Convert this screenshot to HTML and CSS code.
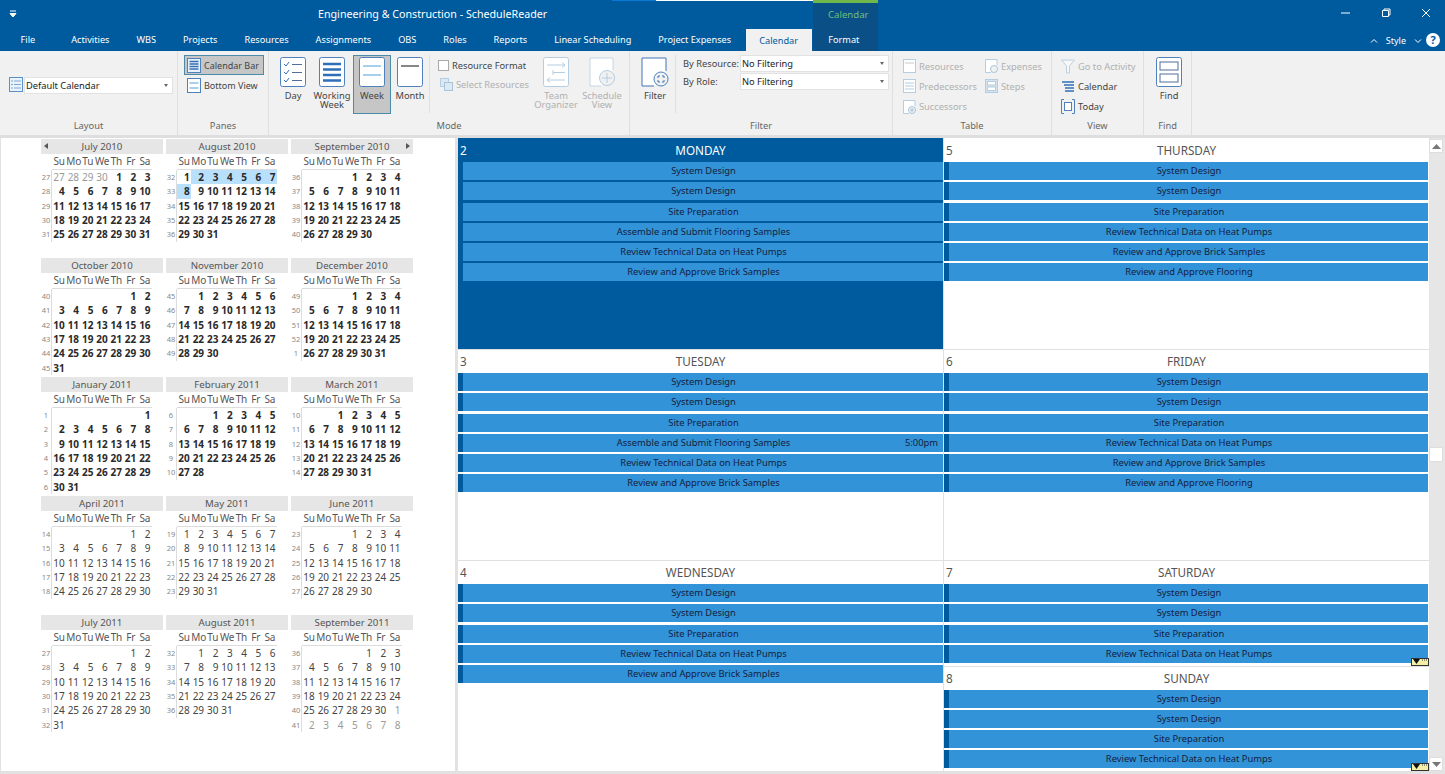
FILE: index.html
```html
<!DOCTYPE html>
<html lang="en">
<head>
    <meta charset="UTF-8">
    <title>Engineering &amp; Construction - ScheduleReader</title>
    <link rel="stylesheet" href="styles.css">
</head>
<body>
    <header class="titlebar">
        <div class="context-band"></div>
        <div class="progress-strip"><span class="strip-blue"></span><span class="strip-white"></span><span class="strip-green"></span></div>
        <div class="title-row">
            <svg class="qat" width="8" height="8" viewBox="0 0 8 8"><path d="M1 1h6M1 3.5h6L4 7z" stroke="#fff" fill="#fff"/></svg>
            <span class="app-title">Engineering &amp; Construction - ScheduleReader</span>
            <span class="context-title">Calendar</span>
            <div class="window-buttons">
                <svg width="10" height="10" viewBox="0 0 10 10"><path d="M0 5h9" stroke="#fff"/></svg>
                <svg width="10" height="10" viewBox="0 0 10 10"><path d="M1.5 2.5h6v6h-6zM3 2.5V1h6v6H7.5" stroke="#fff" fill="none"/></svg>
                <svg width="10" height="10" viewBox="0 0 10 10"><path d="M1 1l8 8M9 1l-8 8" stroke="#fff"/></svg>
            </div>
        </div>
        <nav class="tab-row">
            <a class="tab tab-file">File</a>
            <a class="tab">Activities</a>
            <a class="tab">WBS</a>
            <a class="tab">Projects</a>
            <a class="tab">Resources</a>
            <a class="tab">Assignments</a>
            <a class="tab">OBS</a>
            <a class="tab">Roles</a>
            <a class="tab">Reports</a>
            <a class="tab">Linear Scheduling</a>
            <a class="tab">Project Expenses</a>
            <a class="tab tab-active">Calendar</a>
            <a class="tab tab-format">Format</a>
            <div class="style-menu">
                <svg width="8" height="6" viewBox="0 0 8 6"><path d="M1 4.5l3-3 3 3" stroke="#fff" fill="none"/></svg>
                <span>Style</span>
                <svg width="8" height="6" viewBox="0 0 8 6"><path d="M1 1.5l3 3 3-3" stroke="#fff" fill="none"/></svg>
                <span class="help">?</span>
            </div>
        </nav>
    </header>

    <section class="ribbon">
        <div class="group g-layout">
            <div class="group-body">
                <svg width="14" height="15" viewBox="0 0 14 15"><rect x=".5" y=".5" width="13" height="14" fill="#eaf3fb" stroke="#5b8fc7"/><path d="M2 4h2M5 4h7M2 7.5h2M5 7.5h7M2 11h2M5 11h7" stroke="#7fa8d4"/></svg>
                <div class="combo combo-layout">Default Calendar<i class="caret"></i></div>
            </div>
            <div class="group-label">Layout</div>
        </div>

        <div class="group g-panes">
            <div class="group-body">
                <div class="small-btn selected">
                    <svg width="14" height="15" viewBox="0 0 14 15"><rect x=".5" y=".5" width="13" height="14" fill="#e8f1fa" stroke="#4f81bd"/><path d="M2.5 3.5h9M2.5 6h9M2.5 8.5h9M2.5 11h9" stroke="#3a70b5" stroke-width="1.3"/></svg>
                    Calendar Bar
                </div>
                <div class="small-btn">
                    <svg width="14" height="15" viewBox="0 0 14 15"><rect x=".5" y=".5" width="13" height="14" fill="#fff" stroke="#4f81bd"/><path d="M2.5 5h9M2.5 10h9" stroke="#8fc0e6" stroke-width="1.3"/></svg>
                    Bottom View
                </div>
            </div>
            <div class="group-label">Panes</div>
        </div>

        <div class="group g-mode">
            <div class="group-body">
                <div class="big-btn">
                    <svg width="26" height="30" viewBox="0 0 26 30"><rect x=".5" y=".5" width="25" height="29" rx="2" fill="#fff" stroke="#4f81bd"/><path d="M4 7l2 2 3-4M4 15l2 2 3-4M4 23l2 2 3-4" stroke="#2f6fb7" fill="none"/><path d="M12 7.5h10M12 15.5h10M12 23.5h10" stroke="#4f6fa0"/></svg>
                    <span>Day</span>
                </div>
                <div class="big-btn btn-working">
                    <svg width="26" height="30" viewBox="0 0 26 30"><rect x=".5" y=".5" width="25" height="29" rx="2" fill="#fff" stroke="#4f81bd"/><path d="M4 7h18M4 12.500h18M4 18h18M4 23.500h18" stroke="#2f6fb7" stroke-width="2.500"/></svg>
                    <span>Working<br>Week</span>
                </div>
                <div class="big-btn selected">
                    <svg width="26" height="30" viewBox="0 0 26 30"><rect x=".5" y=".5" width="25" height="29" rx="2" fill="#fff" stroke="#4f81bd"/><path d="M4 9h18M4 18h18" stroke="#a4d0ee" stroke-width="2"/></svg>
                    <span>Week</span>
                </div>
                <div class="big-btn">
                    <svg width="26" height="30" viewBox="0 0 26 30"><rect x=".5" y=".5" width="25" height="29" rx="2" fill="#fff" stroke="#4f81bd"/><path d="M4 9h18" stroke="#888" stroke-width="2"/></svg>
                    <span>Month</span>
                </div>
                <div class="inner-sep"></div>
                <div class="small-col">
                    <label class="check-row"><i class="checkbox"></i>Resource Format</label>
                    <div class="small-btn disabled">
                        <svg width="13" height="13" viewBox="0 0 13 13"><rect x=".5" y=".5" width="8" height="8" fill="#dce8f2" stroke="#b5cde0"/><rect x="4.500" y="4.500" width="8" height="8" fill="#dce8f2" stroke="#a8c4da"/></svg>
                        Select Resources
                    </div>
                </div>
                <div class="big-btn wide disabled">
                    <svg width="26" height="30" viewBox="0 0 26 30"><rect x=".5" y=".5" width="25" height="29" rx="2" fill="#fff" stroke="#b5cde0"/><path d="M4 8h18l-3-2.500M22 8l-3 2.500M10 15.500h12M10 13v5M4 23h18M4 23l3-2.500M4 23l3 2.500" fill="none" stroke="#b5cde0"/></svg>
                    <span>Team<br>Organizer</span>
                </div>
                <div class="big-btn wide disabled">
                    <svg width="26" height="30" viewBox="0 0 26 30"><path d="M24 13V1H1v28h11" fill="#fff" stroke="#c3d6e6"/><circle cx="18" cy="21" r="7.500" fill="#f1f1f1" stroke="#b5cde0"/><path d="M18 16v10M13 21h10" stroke="#b5cde0"/></svg>
                    <span>Schedule<br>View</span>
                </div>
            </div>
            <div class="group-label">Mode</div>
        </div>

        <div class="group g-filter">
            <div class="group-body">
                <div class="big-btn filter-btn">
                    <svg width="28" height="30" viewBox="0 0 28 30"><path d="M25 14V1H1v28h12" fill="#fff" stroke="#3f74b5"/><circle cx="20" cy="22" r="7" fill="#f1f1f1" stroke="#4f81bd"/><path d="M17 19h2M21 19h2M17 25h2M21 25h2M17 19v2M23 19v2M17 23v2M23 23v2" stroke="#3f74b5"/></svg>
                    <span>Filter</span>
                </div>
                <div class="inner-sep"></div>
                <div class="filter-fields">
                    <div class="filter-row"><span>By Resource:</span><div class="combo combo-filter">No Filtering<i class="caret"></i></div></div>
                    <div class="filter-row"><span>By Role:</span><div class="combo combo-filter">No Filtering<i class="caret"></i></div></div>
                </div>
            </div>
            <div class="group-label">Filter</div>
        </div>

        <div class="group g-table">
            <div class="group-body">
                <div class="small-col table-col">
                    <div class="small-btn disabled">
                        <svg width="13" height="14" viewBox="0 0 13 14"><rect x=".5" y=".5" width="12" height="13" fill="#fff" stroke="#b5cde0"/><path d="M2 4h9" stroke="#c8c8c8"/></svg>
                        Resources
                    </div>
                    <div class="small-btn disabled">
                        <svg width="13" height="14" viewBox="0 0 13 14"><rect x=".5" y=".5" width="12" height="13" fill="#fff" stroke="#b5cde0"/><path d="M2 4h9M2 7h9M2 10h9" stroke="#b5cde0"/></svg>
                        Predecessors
                    </div>
                    <div class="small-btn disabled">
                        <svg width="13" height="14" viewBox="0 0 13 14"><path d="M12 6V.5H.5v13H6" fill="#fff" stroke="#b5cde0"/><circle cx="9" cy="10" r="3.500" fill="#f1f1f1" stroke="#a8c4da"/><path d="M9 8v4M7 10h4" stroke="#a8c4da"/></svg>
                        Successors
                    </div>
                </div>
                <div class="small-col table-col">
                    <div class="small-btn disabled">
                        <svg width="13" height="14" viewBox="0 0 13 14"><path d="M12 6V.5H.5v13H6" fill="#fff" stroke="#b5cde0"/><circle cx="9" cy="10" r="3.500" fill="#f1f1f1" stroke="#a8c4da"/></svg>
                        Expenses
                    </div>
                    <div class="small-btn disabled">
                        <svg width="13" height="14" viewBox="0 0 13 14"><rect x=".5" y=".5" width="12" height="13" fill="#d5e3ef" stroke="#b5cde0"/><rect x="2.500" y="2.500" width="8" height="3.500" fill="#fff" stroke="#b5cde0"/><rect x="2.500" y="8" width="8" height="3.500" fill="#fff" stroke="#b5cde0"/></svg>
                        Steps
                    </div>
                </div>
            </div>
            <div class="group-label">Table</div>
        </div>

        <div class="group g-view">
            <div class="group-body">
                <div class="small-col table-col">
                    <div class="small-btn disabled">
                        <svg width="14" height="15" viewBox="0 0 14 15"><path d="M.5 1h13L8.500 7v7h-3V7z" fill="#f7f7f7" stroke="#bcd0e0"/></svg>
                        Go to Activity
                    </div>
                    <div class="small-btn">
                        <svg width="14" height="15" viewBox="0 0 14 15"><path d="M1 3h12M3 6h10M4 9h9M4 12h9" stroke="#2f6fb7" stroke-width="1.600"/></svg>
                        Calendar
                    </div>
                    <div class="small-btn">
                        <svg width="14" height="15" viewBox="0 0 14 15"><path d="M3 .5H.5v14H3M11 .5h2.500v14H11" fill="none" stroke="#4f81bd"/><rect x="3.500" y="3.500" width="7" height="8" fill="#fff" stroke="#4f81bd"/></svg>
                        Today
                    </div>
                </div>
            </div>
            <div class="group-label">View</div>
        </div>

        <div class="group g-find">
            <div class="group-body">
                <div class="big-btn">
                    <svg width="26" height="30" viewBox="0 0 26 30"><rect x=".5" y=".5" width="25" height="29" rx="2" fill="#fff" stroke="#4f81bd"/><rect x="4" y="5" width="18" height="8" fill="#fff" stroke="#4f6fa0"/><rect x="4" y="17" width="18" height="8" fill="#fff" stroke="#4f6fa0"/></svg>
                    <span>Find</span>
                </div>
            </div>
            <div class="group-label">Find</div>
        </div>
    </section>

    <main class="workspace">
        <aside class="calendar-pane" id="calendarPane"></aside>
        <div class="splitter"></div>

        <div class="days">
            <div class="day day-tall day-selected">
                <div class="day-head"><span>2</span><b>MONDAY</b></div>
                <div class="bar">System Design</div>
                <div class="bar">System Design</div>
                <div class="bar">Site Preparation</div>
                <div class="bar">Assemble and Submit Flooring Samples</div>
                <div class="bar">Review Technical Data on Heat Pumps</div>
                <div class="bar">Review and Approve Brick Samples</div>
            </div>
            <div class="day day-tall day-right">
                <div class="day-head"><span>5</span><b>THURSDAY</b></div>
                <div class="bar">System Design</div>
                <div class="bar">System Design</div>
                <div class="bar">Site Preparation</div>
                <div class="bar">Review Technical Data on Heat Pumps</div>
                <div class="bar">Review and Approve Brick Samples</div>
                <div class="bar">Review and Approve Flooring</div>
            </div>
            <div class="day day-tall">
                <div class="day-head"><span>3</span><b>TUESDAY</b></div>
                <div class="bar">System Design</div>
                <div class="bar">System Design</div>
                <div class="bar">Site Preparation</div>
                <div class="bar">Assemble and Submit Flooring Samples<em class="bar-time">5:00pm</em></div>
                <div class="bar">Review Technical Data on Heat Pumps</div>
                <div class="bar">Review and Approve Brick Samples</div>
            </div>
            <div class="day day-tall day-right">
                <div class="day-head"><span>6</span><b>FRIDAY</b></div>
                <div class="bar">System Design</div>
                <div class="bar">System Design</div>
                <div class="bar">Site Preparation</div>
                <div class="bar">Review Technical Data on Heat Pumps</div>
                <div class="bar">Review and Approve Brick Samples</div>
                <div class="bar">Review and Approve Flooring</div>
            </div>
            <div class="day day-wed">
                <div class="day-head"><span>4</span><b>WEDNESDAY</b></div>
                <div class="bar">System Design</div>
                <div class="bar">System Design</div>
                <div class="bar">Site Preparation</div>
                <div class="bar">Review Technical Data on Heat Pumps</div>
                <div class="bar">Review and Approve Brick Samples</div>
            </div>
            <div class="day day-sat day-right">
                <div class="day-head"><span>7</span><b>SATURDAY</b></div>
                <div class="bar">System Design</div>
                <div class="bar">System Design</div>
                <div class="bar">Site Preparation</div>
                <div class="bar">Review Technical Data on Heat Pumps</div>
                <div class="more"><svg width="16" height="5" viewBox="0 0 16 5"><path d="M1 0h7L4.500 5z" fill="#111"/><path d="M10 1h1M12 1h1M14 1h1" stroke="#333"/></svg></div>
            </div>
            <div class="day day-sun day-right">
                <div class="day-head"><span>8</span><b>SUNDAY</b></div>
                <div class="bar">System Design</div>
                <div class="bar">System Design</div>
                <div class="bar">Site Preparation</div>
                <div class="bar">Review Technical Data on Heat Pumps</div>
                <div class="more"><svg width="16" height="5" viewBox="0 0 16 5"><path d="M1 0h7L4.500 5z" fill="#111"/><path d="M10 1h1M12 1h1M14 1h1" stroke="#333"/></svg></div>
            </div>
        </div>

        <div class="scrollbar">
            <div class="scroll-btn"><svg width="9" height="5" viewBox="0 0 9 5"><path d="M4.500 0L9 5H0z" fill="#777"/></svg></div>
            <div class="scroll-thumb"></div>
            <div class="scroll-btn scroll-down"><svg width="9" height="5" viewBox="0 0 9 5"><path d="M0 0h9L4.500 5z" fill="#777"/></svg></div>
        </div>
    </main>

    <script src="calendar.js"></script>
</body>
</html>
```

FILE: styles.css
```css
* {
    box-sizing: border-box;
}

html, body {
    margin: 0;
    height: 774px;
    overflow: hidden;
}

body {
    font-family: "Noto Sans", "Open Sans", sans-serif;
    font-size: 9.3px;
    color: #444;
    background: #e2e2e2;
}

svg {
    display: block;
    flex: none;
}

/* title bar and tabs */
.titlebar {
    position: relative;
    height: 51px;
    background: #005a9e;
    color: #fff;
}

.context-band {
    position: absolute;
    left: 813px;
    top: 0;
    width: 65px;
    height: 51px;
    background: #0a4f85;
}

.progress-strip {
    position: absolute;
    left: 612px;
    top: 0;
    display: flex;
    height: 3px;
}

.strip-blue {
    width: 44px;
    height: 1px;
    background: #0a78d7;
}

.strip-white {
    width: 157px;
    height: 1px;
    background: #fff;
}

.strip-green {
    width: 65px;
    background: #70b84a;
}

.title-row {
    position: relative;
    display: flex;
    align-items: center;
    height: 28px;
    padding-left: 9px;
}

.app-title {
    margin-left: 301px;
    width: 509px;
    font-size: 10.7px;
}

.context-title {
    width: 70px;
    padding-left: 1px;
    color: #6cc07a;
    font-size: 9.6px;
}

.window-buttons {
    display: flex;
    gap: 30px;
    margin-left: auto;
    margin-right: 14px;
    margin-bottom: 2px;
}

.tab-row {
    position: relative;
    display: flex;
    height: 23px;
    padding-left: 7px;
}

.tab {
    padding: 0 13.5px;
    line-height: 24px;
    font-size: 9.2px;
    white-space: nowrap;
}

.tab-file {
    margin-right: 9px;
}

.tab-active {
    width: 66px;
    margin-top: 1px;
    margin-left: 1px;
    padding: 0;
    line-height: 23px;
    text-align: center;
    background: #f1f1f1;
    color: #005a9e;
}

.tab-format {
    margin-left: 3px;
}

.style-menu {
    display: flex;
    align-items: center;
    gap: 8px;
    margin-left: auto;
    margin-right: 5px;
    padding-top: 2px;
    font-size: 9px;
}

.help {
    width: 14px;
    height: 14px;
    margin-left: -4px;
    margin-top: -2px;
    border-radius: 50%;
    background: #fff;
    color: #005a9e;
    font-weight: bold;
    font-size: 11px;
    line-height: 14px;
    text-align: center;
}

/* ribbon */
.ribbon {
    display: flex;
    height: 87px;
    background: #f1f1f1;
    border-bottom: 3px solid #dedede;
}

.group {
    display: flex;
    flex-direction: column;
    flex: none;
    border-right: 1px solid #dfdfdf;
}

.group-body {
    flex: 1;
    display: flex;
    min-height: 0;
}

.group-label {
    height: 18px;
    text-align: center;
    color: #666;
    line-height: 18px;
}

.g-layout { width: 178px; }
.g-panes { width: 91px; }
.g-mode { width: 361px; }
.g-filter { width: 263px; }
.g-table { width: 159px; }
.g-view { width: 92px; }
.g-find { width: 48px; }

.g-layout .group-body {
    align-items: flex-start;
    gap: 1px;
    padding: 26px 0 0 9px;
}

.g-panes .group-body {
    flex-direction: column;
    padding: 4px 0 0 6px;
    font-size: 9px;
}

.g-mode .group-body {
    padding: 4px 0 0 5px;
}

.g-filter .group-body {
    padding: 4px 0 0 5px;
}

.g-table .group-body {
    padding-top: 5px;
    padding-left: 8px;
}

.g-view .group-body {
    padding-top: 5px;
    padding-left: 8px;
}

.g-find .group-body {
    padding: 4px 0 0 6px;
}

.combo {
    position: relative;
    background: #fff;
    border: 1px solid #e2e2e2;
    color: #222;
    padding-left: 1px;
    white-space: nowrap;
}

.combo-layout {
    width: 149px;
    height: 17px;
    line-height: 16px;
}

.combo-filter {
    width: 149px;
    height: 17px;
    line-height: 16px;
}

.caret {
    position: absolute;
    right: 4px;
    top: 6px;
    border: 2.5px solid transparent;
    border-top: 3px solid #666;
}

.small-btn {
    display: flex;
    align-items: center;
    flex: none;
    gap: 3px;
    width: 80px;
    height: 20.3px;
    padding-left: 4px;
    white-space: nowrap;
}

.g-panes .small-btn {
    padding-left: 3px;
}

.g-panes .small-btn.selected {
    background: #c6c6c6;
    border: 1px solid #4b8ba8;
    padding-left: 2px;
}

.small-btn.disabled,
.big-btn.disabled {
    color: #b0b0b0;
}

.big-btn {
    display: flex;
    flex-direction: column;
    align-items: center;
    flex: none;
    width: 38px;
    height: 59px;
    padding-top: 2px;
    line-height: 9px;
    text-align: center;
}

.big-btn span {
    margin-top: 4px;
}

.big-btn.selected {
    margin-left: 2px;
    background: #c6c6c6;
    border: 1px solid #4b8ba8;
    padding-top: 1px;
}

.btn-working {
    margin-left: 1px;
}

.big-btn.wide {
    width: 44px;
}

.big-btn.wide + .big-btn.wide {
    margin-left: 2px;
}

.filter-btn {
    width: 40px;
}

.inner-sep {
    width: 1px;
    height: 58px;
    background: #e0e0e0;
    flex: none;
}

.small-col {
    display: flex;
    flex-direction: column;
    width: 104px;
    padding-left: 8px;
    flex: none;
}

.small-col .small-btn {
    padding-left: 2px;
}

.small-col .check-row + .small-btn {
    height: 18.5px;
}

.table-col {
    width: auto;
    padding-left: 0;
}

.g-table .small-btn {
    width: 82px;
    padding-left: 2px;
}

.g-view .small-btn {
    padding-left: 1px;
}

.check-row {
    display: flex;
    align-items: center;
    flex: none;
    gap: 3px;
    height: 20.3px;
    color: #444;
}

.checkbox {
    width: 11px;
    height: 11px;
    background: #fff;
    border: 1px solid #aaa;
}

.filter-fields {
    margin-left: 7px;
}

.filter-row {
    display: flex;
    align-items: center;
    height: 17.5px;
}

.filter-row span {
    width: 57px;
    white-space: nowrap;
}

/* month calendars */
.workspace {
    display: flex;
    height: 636px;
    padding-bottom: 3px;
}

.calendar-pane {
    display: grid;
    grid-template-columns: repeat(3, 122px);
    grid-auto-rows: 119px;
    column-gap: 3px;
    align-content: start;
    width: 455px;
    padding: 1px 0 0 40px;
    background: #fff;
    border-left: 1px solid #e2e2e2;
    font-size: 10px;
}

.month-title {
    position: relative;
    height: 15px;
    background: #e6e6e6;
    color: #555;
    font-size: 9.7px;
    text-align: center;
    line-height: 16px;
}

.month-grid {
    display: grid;
    grid-template-columns: 11px repeat(7, 14.3px);
    grid-template-rows: 16px;
    grid-auto-rows: 14.33px;
    line-height: 15px;
}

.dow {
    text-align: center;
    color: #555;
    border-bottom: 1px solid #dcdcdc;
    letter-spacing: -0.2px;
}

.dow-blank {
    border-bottom: 0;
}

.week-no {
    font-size: 7.5px;
    text-align: center;
    color: #888;
    border-right: 1px solid #dcdcdc;
}

.date {
    padding-right: 1.5px;
    text-align: right;
    color: #444;
}

.date.bold {
    font-weight: bold;
    color: #2a2a2a;
}

.date.other {
    color: #999;
    font-weight: normal;
}

.date.picked {
    background: #b8e0fd;
}

.nav-arrow {
    position: absolute;
    top: 4px;
    border: 3.5px solid transparent;
}

.nav-prev {
    left: 3px;
    border-left: 0;
    border-right: 4px solid #555;
}

.nav-next {
    right: 3px;
    border-right: 0;
    border-left: 4px solid #555;
}

.splitter {
    width: 3px;
    background: #e2e2e2;
}

/* day boxes */
.days {
    display: grid;
    grid-template-columns: 486px 485px;
    grid-template-rows: repeat(6, 1fr);
    width: 971px;
    background: #fff;
}

.day {
    position: relative;
    box-shadow: 0 1px 0 #e0e0e0;
    border-right: 1px solid #e0e0e0;
    overflow: hidden;
}

.day-right {
    border-right: 0;
}

.day-tall {
    grid-row: span 2;
}

.day-wed {
    grid-row: 5 / span 2;
    grid-column: 1;
}

.day-sat {
    grid-row: 5;
    grid-column: 2;
}

.day-sun {
    grid-row: 6;
    grid-column: 2;
}

.day-selected {
    background: #005a9e;
}

.day-selected .day-head {
    color: #fff;
}

.day-head {
    display: grid;
    grid-template-columns: 1fr auto 1fr;
    height: 24px;
    font-size: 11.7px;
    line-height: 25px;
    color: #555;
}

.day-head span {
    padding-left: 2px;
}

.day-head b {
    font-weight: normal;
}

.bar {
    position: relative;
    height: 18px;
    margin-bottom: 2.3px;
    padding-left: 1px;
    background: #3293d9;
    border-left: 5.5px solid #005a9e;
    color: #14213d;
    font-size: 9.35px;
    text-align: center;
    line-height: 18.6px;
    white-space: nowrap;
}

.day-right .bar {
    margin-right: 1px;
}

.bar-time {
    position: absolute;
    right: 5px;
    top: 0;
    font-style: normal;
}

.more {
    position: absolute;
    right: 0;
    bottom: 0;
    width: 18px;
    height: 8px;
    padding: 0;
    background: #f4efa5;
    border: 1px solid #333;
}

/* scrollbar */
.scrollbar {
    display: flex;
    flex-direction: column;
    width: 16px;
    background: #e6e6e6;
}

.scroll-btn {
    display: flex;
    align-items: center;
    justify-content: center;
    width: 14px;
    height: 14px;
    margin-top: 1px;
    background: #fff;
    border: 1px solid #ddd;
}

.scroll-thumb {
    width: 14px;
    height: 15px;
    margin-top: 294px;
    background: #fff;
    border: 1px solid #ddd;
}

.scroll-down {
    margin-top: auto;
}
```

FILE: calendar.js
```js
// months shown in the side pane
const MONTHS = ['January', 'February', 'March', 'April', 'May', 'June', 'July',
    'August', 'September', 'October', 'November', 'December'];
const DOW = ['Su', 'Mo', 'Tu', 'We', 'Th', 'Fr', 'Sa'];
const COUNT = 15;
const DAY_MS = 86400000;

function addDays(d, n) {
    return new Date(d.getFullYear(), d.getMonth(), d.getDate() + n);
}

// the week holding Jan 1 is week 1, weeks start on Sunday
function weekNumber(sunday) {
    const sat = addDays(sunday, 6);
    const jan1 = new Date(sat.getFullYear(), 0, 1);
    return Math.floor(Math.round((sat - jan1) / DAY_MS) / 7) + 1;
}

function isPicked(d) {
    return d.getFullYear() === 2010 && d.getMonth() === 7 && d.getDate() >= 2 && d.getDate() <= 8;
}

function buildMonth(index) {
    const first = new Date(2010, 6 + index, 1);
    const last = new Date(first.getFullYear(), first.getMonth() + 1, 0);
    const isFirst = index === 0;
    const isLast = index === COUNT - 1;
    const bold = index < 9;

    let html = `<div class="month-title">${MONTHS[first.getMonth()]} ${first.getFullYear()}`;
    if (index === 0) html += '<i class="nav-arrow nav-prev"></i>';
    if (index === 2) html += '<i class="nav-arrow nav-next"></i>';
    html += '</div><div class="month-grid"><span class="dow dow-blank"></span>';
    DOW.forEach(name => { html += `<span class="dow">${name}</span>`; });

    let sunday = addDays(first, -first.getDay());
    let rows = 0;
    while (sunday <= last || (isLast && rows < 6)) {
        html += `<span class="week-no">${weekNumber(sunday)}</span>`;
        for (let i = 0; i < 7; i++) {
            const d = addDays(sunday, i);
            const inMonth = d.getMonth() === first.getMonth();
            const classes = ['date'];
            if (bold) classes.push('bold');
            if (!inMonth) classes.push('other');
            if (isPicked(d)) classes.push('picked');
            const show = inMonth || (isFirst && d < first) || (isLast && d > last);
            html += `<span class="${classes.join(' ')}">${show ? d.getDate() : ''}</span>`;
        }
        sunday = addDays(sunday, 7);
        rows++;
    }
    return `<div class="month">${html}</div></div>`;
}

let out = '';
for (let i = 0; i < COUNT; i++) {
    out += buildMonth(i);
}
document.getElementById('calendarPane').innerHTML = out;
```
